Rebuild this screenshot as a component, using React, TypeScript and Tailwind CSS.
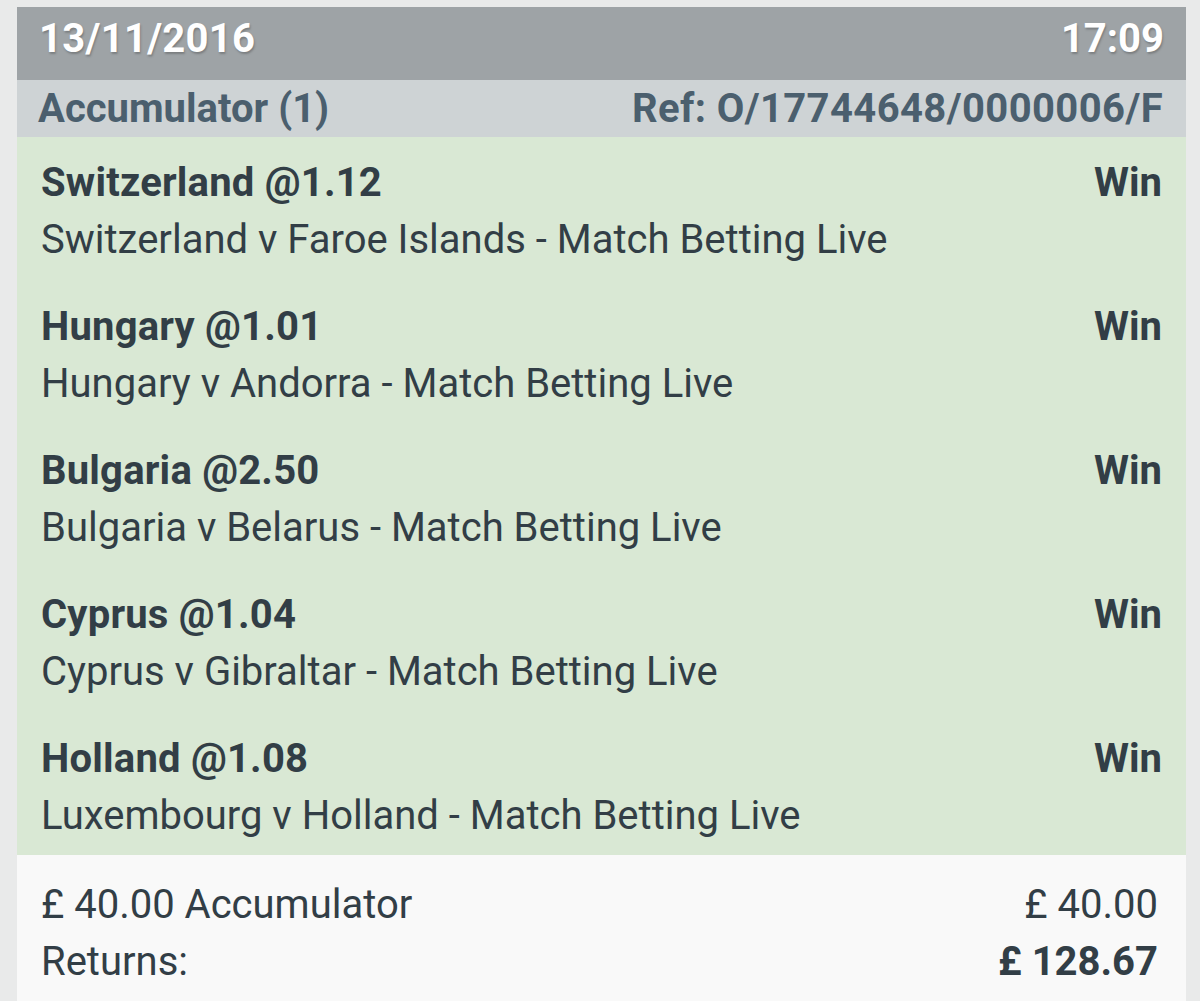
const legs = [
  { pick: "Switzerland @1.12", event: "Switzerland v Faroe Islands - Match Betting Live" },
  { pick: "Hungary @1.01", event: "Hungary v Andorra - Match Betting Live" },
  { pick: "Bulgaria @2.50", event: "Bulgaria v Belarus - Match Betting Live" },
  { pick: "Cyprus @1.04", event: "Cyprus v Gibraltar - Match Betting Live" },
  { pick: "Holland @1.08", event: "Luxembourg v Holland - Match Betting Live" },
];

export default function App() {
  return (
    <div className="min-h-[1001px] bg-[#e9eaea] pt-[7px] pl-[17px] pr-[14px] font-['Roboto',sans-serif] text-[#323e46]">
      <div className="flex flex-col">
        {/* date / time bar */}
        <div className="flex h-[73px] items-start justify-between bg-[#9ea3a6] pt-[12px] pl-[22px] pr-[22px] text-[40px] font-bold leading-[40px] text-white [text-shadow:1px_2px_2px_rgba(60,60,60,0.35)]">
          <span className="tracking-[0.3px]">13/11/2016</span>
          <span>17:09</span>
        </div>

        {/* bet type + reference */}
        <div className="flex h-[57px] items-start justify-between bg-[#ced3d5] pt-[9px] pl-[21px] pr-[23px] text-[40px] font-bold leading-[40px] text-[#4b5f6e]">
          <span>Accumulator (1)</span>
          <span className="tracking-[0.4px]">Ref: O/17744648/0000006/F</span>
        </div>

        {/* selections */}
        <div className="flex flex-col gap-[30px] bg-[#d9e8d4] pt-[17px] pb-[11px] pl-[24px] pr-[24px]">
          {legs.map((leg) => (
            <div key={leg.pick} className="flex justify-between text-[40px] leading-[57px]">
              <div>
                <div className="font-bold tracking-[0.2px]">{leg.pick}</div>
                <div>{leg.event}</div>
              </div>
              <div className="font-bold">Win</div>
            </div>
          ))}
        </div>

        {/* stake + returns */}
        <div className="flex flex-col bg-[#f9f9f9] pt-[21px] pb-[20px] pl-[24px] pr-[28px] text-[40px] leading-[57px]">
          <div className="flex justify-between">
            <span>£ 40.00 Accumulator</span>
            <span>£ 40.00</span>
          </div>
          <div className="flex justify-between">
            <span>Returns:</span>
            <span className="font-bold">£ 128.67</span>
          </div>
        </div>
      </div>
    </div>
  );
}
